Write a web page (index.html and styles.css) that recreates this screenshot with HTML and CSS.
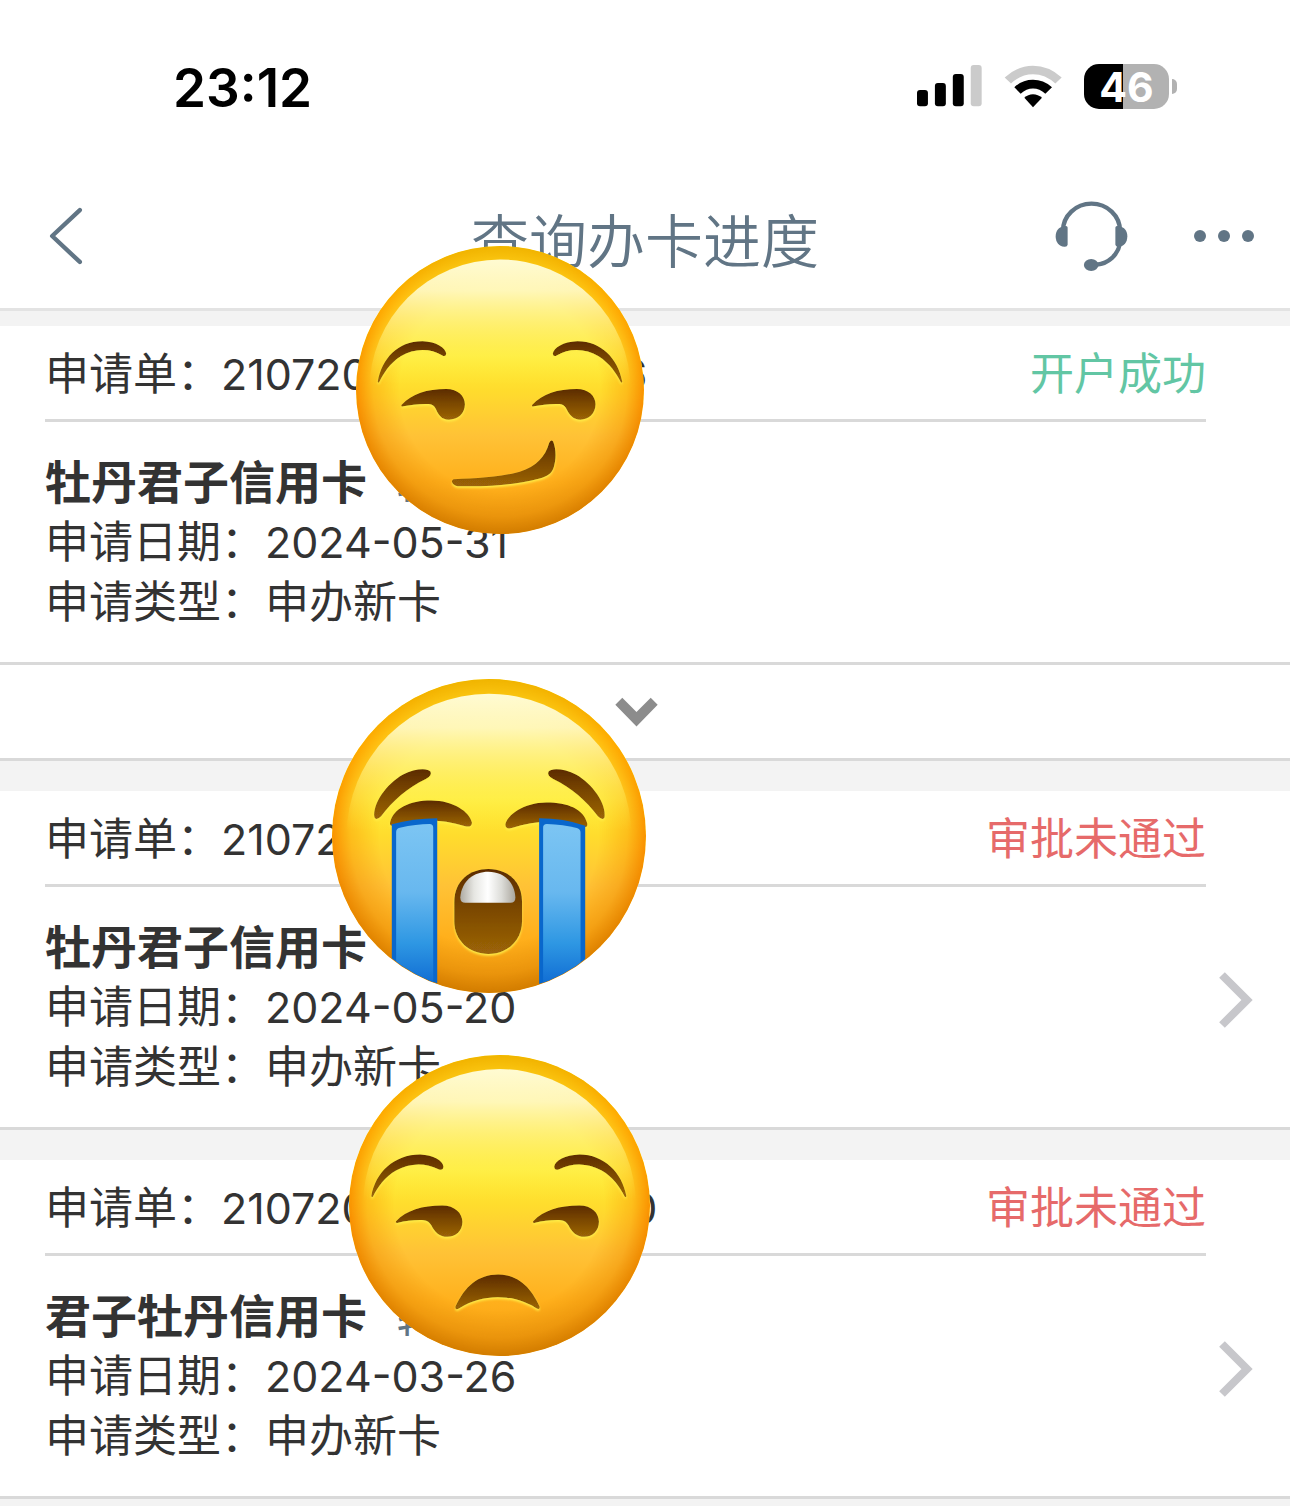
FILE: index.html
```html
<!DOCTYPE html>
<html lang="zh-CN">
<head>
  <meta charset="UTF-8">
  <meta name="viewport" content="width=device-width, initial-scale=1">
  <title>查询办卡进度</title>
  <link rel="stylesheet" href="styles.css">
</head>
<body>

  <!-- shared emoji parts -->
  <svg class="defs" width="0" height="0" aria-hidden="true">
    <defs>
      <linearGradient id="skin" x1="0" y1="0" x2="0" y2="1">
        <stop offset="0" stop-color="#ffd51c"/>
        <stop offset=".38" stop-color="#ffee38"/>
        <stop offset=".5" stop-color="#ffdc2d"/>
        <stop offset=".66" stop-color="#ffc236"/>
        <stop offset=".82" stop-color="#ffb01c"/>
        <stop offset="1" stop-color="#f39c10"/>
      </linearGradient>
      <linearGradient id="rimColor" x1="0" y1="0" x2="0" y2="1">
        <stop offset="0" stop-color="#f0b400"/>
        <stop offset=".2" stop-color="#ffa800"/>
        <stop offset=".55" stop-color="#f98e00"/>
        <stop offset="1" stop-color="#d17c00"/>
      </linearGradient>
      <radialGradient id="rimFade">
        <stop offset=".7" stop-color="#fff" stop-opacity="0"/>
        <stop offset=".88" stop-color="#fff" stop-opacity=".4"/>
        <stop offset="1" stop-color="#fff"/>
      </radialGradient>
      <mask id="rimMask">
        <circle cx="150" cy="150" r="150" fill="url(#rimFade)"/>
      </mask>
      <linearGradient id="shine" x1="0" y1="0" x2="0" y2="1">
        <stop offset="0" stop-color="#fffbd2"/>
        <stop offset=".12" stop-color="#fffac8" stop-opacity=".9"/>
        <stop offset=".3" stop-color="#fff27a" stop-opacity=".55"/>
        <stop offset=".48" stop-color="#ffec40" stop-opacity="0"/>
      </linearGradient>
      <linearGradient id="brown" x1="0" y1="0" x2="0" y2="1">
        <stop offset="0" stop-color="#5c2b00"/>
        <stop offset=".5" stop-color="#7d4a04"/>
        <stop offset="1" stop-color="#9c6407"/>
      </linearGradient>
      <linearGradient id="tear" x1="0" y1="0" x2="0" y2="1">
        <stop offset="0" stop-color="#7cc5f3"/>
        <stop offset=".4" stop-color="#68b8ef"/>
        <stop offset=".7" stop-color="#2e97e3"/>
        <stop offset="1" stop-color="#0962cf"/>
      </linearGradient>
      <linearGradient id="teeth">
        <stop offset="0" stop-color="#aeaba3"/>
        <stop offset=".25" stop-color="#e6e6e2"/>
        <stop offset=".5" stop-color="#fff"/>
        <stop offset=".75" stop-color="#dcdcd8"/>
        <stop offset="1" stop-color="#aaa69d"/>
      </linearGradient>
      <filter id="glow" x="-20%" y="-20%" width="140%" height="140%">
        <feDropShadow dx="0" dy="5" stdDeviation="3" flood-color="#ffee46"/>
      </filter>
      <symbol id="face" viewBox="0 0 300 300">
        <circle cx="150" cy="150" r="150" fill="url(#skin)"/>
        <circle cx="150" cy="150" r="150" fill="url(#rimColor)" mask="url(#rimMask)"/>
        <circle cx="150" cy="150" r="136" fill="url(#shine)"/>
      </symbol>
    </defs>
  </svg>

  <header class="header">
    <div class="status-bar">
      <time class="clock">23:12</time>
      <div class="status-icons">
        <svg class="signal" viewBox="78 74 196 126" role="img" aria-label="信号">
          <rect x="78" y="149" width="33" height="49" rx="9"/>
          <rect x="132" y="128" width="33" height="70" rx="9"/>
          <rect x="186" y="101" width="33" height="97" rx="9"/>
          <rect class="off" x="240" y="74" width="33" height="124" rx="9"/>
        </svg>
        <svg class="wifi" viewBox="340 72 174 128" role="img" aria-label="Wi-Fi">
          <path class="off" d="M342 109Q380 74 427 74T513 109L494 127Q464 99 427 99T361 127Z"/>
          <path d="M371 138Q396 116 427 116T484 138L464 158Q447 142 427 142T390 158Z"/>
          <path d="M401 170Q412 159 427 159T454 170L427 198Z"/>
        </svg>
        <div class="battery">46</div>
      </div>
    </div>

    <nav class="nav">
      <button class="icon-btn back" type="button" aria-label="返回">
        <svg viewBox="148 82 100 172"><path d="M239 91L157 168L239 245"/></svg>
      </button>
      <h1 class="nav-title">查询办卡进度</h1>
      <div class="nav-actions">
        <button class="icon-btn service" type="button" aria-label="客服">
          <svg viewBox="496 480 220 214">
            <path class="line" d="M520 570A86 82 0 0 1 692 570M692 608A80 78 0 0 1 622 672"/>
            <path d="M534 560V612Q533 619 524 618C507 616 498 603 498 586S508 559 521 556Q534 554 534 560Z"/>
            <path d="M678 560V612Q679 619 688 618C705 616 714 603 714 586S704 559 691 556Q678 554 678 560Z"/>
            <ellipse cx="605" cy="673" rx="22" ry="18"/>
          </svg>
        </button>
        <button class="icon-btn more" type="button" aria-label="更多">
          <svg viewBox="0 0 180 36"><circle cx="18" cy="18" r="18"/><circle cx="90" cy="18" r="18"/><circle cx="162" cy="18" r="18"/></svg>
        </button>
      </div>
    </nav>
  </header>

  <main class="list">
    <article class="card">
      <div class="card-head">
        <p>申请单：<span class="num">21072010000010006</span></p>
        <span class="status success">开户成功</span>
      </div>
      <div class="card-body">
        <div class="info">
          <h2>牡丹君子信用卡<span class="tag">转</span></h2>
          <p>申请日期：<span class="num">2024-05-31</span></p>
          <p>申请类型：申办新卡</p>
        </div>
      </div>
      <button class="toggle" type="button" aria-label="展开">
        <svg viewBox="104 168 130 90"><path d="M105 191L126 170L169 213L212 170L233 191L169 257Z"/></svg>
      </button>
      <svg class="emoji smirk" viewBox="48 168 862 862" role="img" aria-label="得意">
        <use href="#face" x="48" y="168" width="862" height="862"/>
        <g fill="url(#brown)" filter="url(#glow)">
          <path d="M113 574C126 504 174 452 248 453C288 455 316 472 318 490Q317 502 305 495C270 474 222 474 182 498C148 520 131 549 118 574Q115 579 113 574Z"/>
          <path d="M845 574C832 504 780 452 710 453C668 455 640 472 637 490Q638 502 650 495C686 474 734 474 774 498C808 520 827 549 840 574Q843 579 845 574Z"/>
          <path d="M184 644C216 610 260 596 318 596C353 596 374 617 374 642C374 670 353 688 326 688C304 688 295 674 287 656Q281 642 266 641C238 640 212 643 190 648Q182 650 184 644Z"/>
          <path d="M575 644C607 610 651 596 709 596C744 596 765 617 765 642C765 670 744 688 720 688C698 688 687 674 678 656Q672 642 657 641C629 640 603 643 581 648Q573 650 575 644Z"/>
          <path d="M340 866C410 864 488 858 538 844C588 828 614 800 626 758Q631 746 638 753C648 778 647 808 640 830C634 850 620 857 598 864C536 882 445 889 352 887C335 884 331 870 340 866Z"/>
        </g>
      </svg>
    </article>

    <article class="card">
      <div class="card-head">
        <p>申请单：<span class="num">210720000000000</span></p>
        <span class="status failed">审批未通过</span>
      </div>
      <div class="card-body">
        <div class="info">
          <h2>牡丹君子信用卡</h2>
          <p>申请日期：<span class="num">2024-05-20</span></p>
          <p>申请类型：申办新卡</p>
        </div>
        <a class="detail" href="#" aria-label="查看详情">
          <svg viewBox="0 0 36 58"><path d="M4 4L29 29L4 54"/></svg>
        </a>
      </div>
      <svg class="emoji crying" viewBox="37 26 940 940" role="img" aria-label="大哭">
        <clipPath id="faceClip"><circle cx="507" cy="496" r="468"/></clipPath>
        <use href="#face" x="37" y="26" width="940" height="940"/>
        <g fill="url(#brown)" filter="url(#glow)">
          <path d="M164 440C158 400 200 340 250 312C282 295 324 291 332 304Q337 316 318 325C262 352 218 391 184 437Q169 452 164 440Z"/>
          <path d="M853 440C859 400 817 340 767 312C735 295 693 291 685 304Q680 316 699 325C755 352 799 391 833 437Q848 452 853 440Z"/>
          <path d="M211 455C222 414 268 390 334 390C400 390 449 424 456 456Q455 471 436 467C366 445 286 442 216 465Q209 465 211 455Z"/>
          <path d="M801 458C790 416 744 396 679 396C611 396 561 434 556 462Q557 477 575 472C646 448 724 445 796 469Q803 469 801 458Z"/>
          <path d="M403 693C403 630 450 595 505 595S606 630 606 693V751C606 809 562 849 505 849S403 809 403 751Z"/>
        </g>
        <path d="M421 680C425 630 462 603 505 603S583 630 586 680Q586 696 571 696H436Q421 696 421 680Z" fill="url(#teeth)"/>
        <g clip-path="url(#faceClip)">
          <path d="M216 461Q280 443 352 443V970H216Z" fill="#0967cc"/>
          <path d="M229 484Q229 473 240 471Q290 460 329 460Q340 460 340 471V970H229Z" fill="url(#tear)"/>
          <path d="M657 443Q730 443 795 465V970H657Z" fill="#0967cc"/>
          <path d="M669 471Q669 460 680 460Q730 462 770 472Q781 475 781 486V970H669Z" fill="url(#tear)"/>
        </g>
      </svg>
    </article>

    <article class="card">
      <div class="card-head">
        <p>申请单：<span class="num">21072000000010000</span></p>
        <span class="status failed">审批未通过</span>
      </div>
      <div class="card-body">
        <div class="info">
          <h2>君子牡丹信用卡<span class="tag">转</span></h2>
          <p>申请日期：<span class="num">2024-03-26</span></p>
          <p>申请类型：申办新卡</p>
        </div>
        <a class="detail" href="#" aria-label="查看详情">
          <svg viewBox="0 0 36 58"><path d="M4 4L29 29L4 54"/></svg>
        </a>
      </div>
      <svg class="emoji unamused" viewBox="27 46 902 902" role="img" aria-label="不高兴">
        <use href="#face" x="27" y="46" width="902" height="902"/>
        <g fill="url(#brown)" filter="url(#glow)">
          <path d="M94 468C106 398 162 344 240 344C280 346 308 362 310 380Q309 394 295 388C256 368 208 369 168 392C134 412 114 440 99 470Q94 474 94 468Z"/>
          <path d="M858 468C846 398 790 344 718 344C674 346 645 362 642 380Q643 394 657 388C696 368 744 369 784 392C818 412 838 440 853 470Q858 474 858 468Z"/>
          <path d="M168 544C200 511 246 497 306 497C344 497 367 520 367 546C367 574 347 591 322 591C298 591 284 577 274 557Q266 542 251 541C222 540 198 543 174 549Q165 550 168 544Z"/>
          <path d="M579 544C611 511 657 497 717 497C755 497 776 520 776 546C776 574 756 591 733 591C709 591 695 577 685 557Q677 542 662 541C633 540 609 543 585 549Q576 550 579 544Z"/>
          <path d="M346 800C374 740 414 704 474 704S573 744 598 800Q600 812 587 804C516 760 426 762 359 804Q344 813 346 800Z"/>
        </g>
      </svg>
    </article>
  </main>

</body>
</html>
```
FILE: styles.css
```css
* {
  box-sizing: border-box;
}

body {
  margin: 0;
  min-height: 100vh;
  background: #f3f3f3;
  color: #333;
  font-family: Inter, "Noto Sans CJK SC", sans-serif;
  font-size: 44px;
  line-height: 60px;
}

h1,
h2,
p {
  margin: 0;
}

svg {
  display: block;
}

.defs {
  position: absolute;
}

/* header */

.header {
  background: #fff;
  border-bottom: 3px solid #e3e3e3;
}

.status-bar {
  display: flex;
  justify-content: space-between;
  align-items: center;
  height: 172px;
  padding: 0 114px 0 173px;
  color: #000;
}

.clock {
  padding-top: 4px;
  font-size: 53px;
  font-weight: 600;
}

.status-icons {
  display: flex;
  align-items: center;
  gap: 22px;
}

.signal {
  width: 65px;
  height: 42px;
}

.wifi {
  width: 58px;
  height: 43px;
}

.off {
  fill: #cbcbcb;
}

.battery {
  position: relative;
  width: 85px;
  height: 45px;
  margin-right: 7px;
  border-radius: 15px;
  background: linear-gradient(90deg, #000 46%, #b2b2b2 46%);
  color: #fff;
  font-size: 41px;
  font-weight: 700;
  line-height: 46px;
  text-align: center;
}

.battery::after {
  content: "";
  position: absolute;
  top: 15px;
  right: -8px;
  width: 5px;
  height: 15px;
  border-radius: 0 5px 5px 0;
  background: #b2b2b2;
}

.nav {
  display: grid;
  grid-template-columns: 1fr auto 1fr;
  align-items: center;
  height: 136px;
  padding: 0 36px 8px;
  color: #617585;
}

.nav-title {
  padding-top: 12px;
  font-size: 58px;
  font-weight: 350;
  line-height: 80px;
}

.nav-actions {
  display: flex;
  justify-content: flex-end;
  align-items: center;
  gap: 66px;
}

.icon-btn,
.toggle {
  padding: 0;
  border: none;
  background: none;
  color: inherit;
  cursor: pointer;
}

.icon-btn svg {
  fill: currentColor;
}

.back {
  justify-self: start;
  padding-left: 13px;
}

.back svg {
  width: 34px;
  height: 58px;
  fill: none;
  stroke: currentColor;
  stroke-width: 13;
  stroke-linecap: round;
  stroke-linejoin: round;
}

.service svg {
  width: 73px;
  height: 71px;
}

.service .line {
  fill: none;
  stroke: currentColor;
  stroke-width: 13;
}

.more svg {
  width: 60px;
  height: 12px;
}

/* application list */

.list {
  display: flex;
  flex-direction: column;
  gap: 30px;
  padding-top: 15px;
}

.card {
  position: relative;
  background: #fff;
  border-bottom: 3px solid #d9d9d9;
}

.card-head {
  display: flex;
  justify-content: space-between;
  align-items: center;
  height: 96px;
  margin: 0 84px 0 45px;
  padding-top: 2px;
  border-bottom: 3px solid #d9d9d9;
}

.num {
  font-size: 43px;
  line-height: 40px;
}

.success {
  color: #62c6a4;
}

.failed {
  color: #e66a6a;
}

.card-body {
  display: flex;
  justify-content: space-between;
  align-items: center;
  padding: 30px 36px 30px 45px;
}

.info p,
.info h2 {
  height: 60px;
}

.info h2 {
  font-size: 46px;
  font-weight: 700;
}

.tag {
  margin-left: 30px;
  color: #617585;
  font-size: 36px;
  font-weight: 500;
  line-height: 40px;
}

.detail {
  padding-bottom: 14px;
}

.detail svg {
  width: 36px;
  height: 58px;
  fill: none;
  stroke: #c7c7cb;
  stroke-width: 8;
}

.toggle {
  display: flex;
  justify-content: center;
  align-items: center;
  width: 100%;
  height: 96px;
  padding-right: 18px;
  border-top: 3px solid #d9d9d9;
}

.toggle svg {
  width: 43px;
  height: 30px;
  fill: #8c8c8c;
}

/* stickers lie over the cards */

.emoji {
  position: absolute;
  z-index: 1;
}

.smirk {
  top: -80px;
  left: 356px;
  width: 288px;
}

.crying {
  top: -112px;
  left: 332px;
  width: 314px;
}

.unamused {
  top: -105px;
  left: 349px;
  width: 301px;
}
```
